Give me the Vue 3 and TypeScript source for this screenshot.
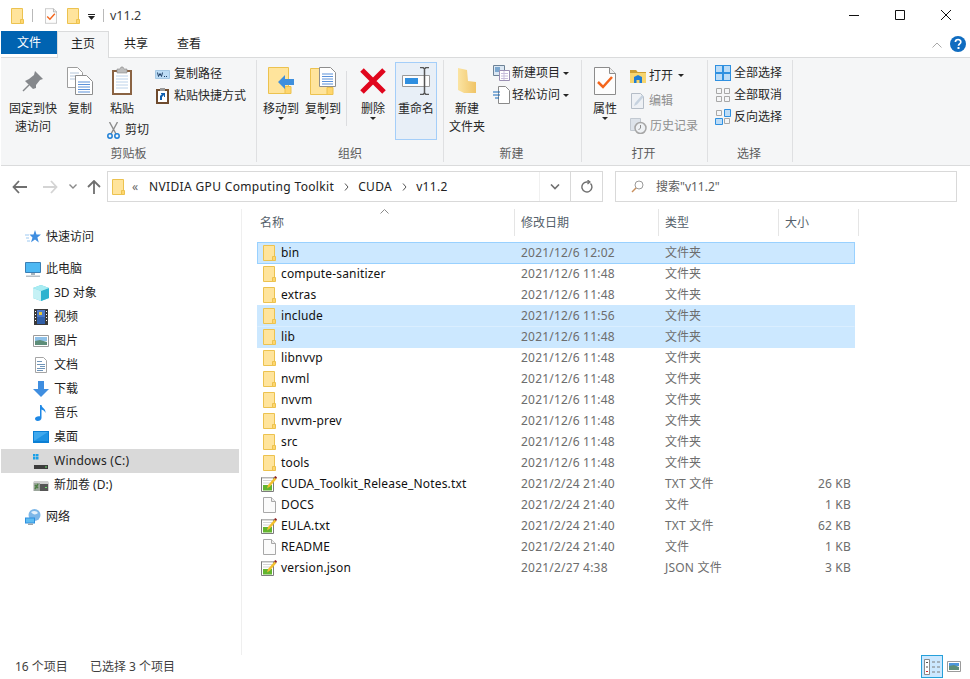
<script setup lang="ts">
type FileRow = { name: string; date: string; type: string; size: string; icon: string; sel: string };
const fo = '文件夹';
const d1 = '2021/12/6 11:48';
const files: FileRow[] = [
  { name: 'bin', date: '2021/12/6 12:02', type: fo, size: '', icon: 'i-folder', sel: 'focus' },
  { name: 'compute-sanitizer', date: d1, type: fo, size: '', icon: 'i-folder', sel: '' },
  { name: 'extras', date: d1, type: fo, size: '', icon: 'i-folder', sel: '' },
  { name: 'include', date: '2021/12/6 11:56', type: fo, size: '', icon: 'i-folder', sel: 'picked' },
  { name: 'lib', date: d1, type: fo, size: '', icon: 'i-folder', sel: 'picked next' },
  { name: 'libnvvp', date: d1, type: fo, size: '', icon: 'i-folder', sel: '' },
  { name: 'nvml', date: d1, type: fo, size: '', icon: 'i-folder', sel: '' },
  { name: 'nvvm', date: d1, type: fo, size: '', icon: 'i-folder', sel: '' },
  { name: 'nvvm-prev', date: d1, type: fo, size: '', icon: 'i-folder', sel: '' },
  { name: 'src', date: d1, type: fo, size: '', icon: 'i-folder', sel: '' },
  { name: 'tools', date: d1, type: fo, size: '', icon: 'i-folder', sel: '' },
  { name: 'CUDA_Toolkit_Release_Notes.txt', date: '2021/2/24 21:40', type: 'TXT 文件', size: '26 KB', icon: 'i-txt', sel: '' },
  { name: 'DOCS', date: '2021/2/24 21:40', type: '文件', size: '1 KB', icon: 'i-blank', sel: '' },
  { name: 'EULA.txt', date: '2021/2/24 21:40', type: 'TXT 文件', size: '62 KB', icon: 'i-txt', sel: '' },
  { name: 'README', date: '2021/2/24 21:40', type: '文件', size: '1 KB', icon: 'i-blank', sel: '' },
  { name: 'version.json', date: '2021/2/27 4:38', type: 'JSON 文件', size: '3 KB', icon: 'i-txt', sel: '' },
];
const navItems = [
  { label: '快速访问', icon: 'n-star', cls: 'top' },
  { label: '此电脑', icon: 'n-pc', cls: 'top gap' },
  { label: '3D 对象', icon: 'n-cube', cls: 'sub' },
  { label: '视频', icon: 'n-film', cls: 'sub' },
  { label: '图片', icon: 'n-pic', cls: 'sub' },
  { label: '文档', icon: 'n-doc', cls: 'sub' },
  { label: '下载', icon: 'n-down', cls: 'sub' },
  { label: '音乐', icon: 'n-music', cls: 'sub' },
  { label: '桌面', icon: 'n-desk', cls: 'sub' },
  { label: 'Windows (C:)', icon: 'n-c', cls: 'sub on' },
  { label: '新加卷 (D:)', icon: 'n-d', cls: 'sub' },
  { label: '网络', icon: 'n-net', cls: 'top gap' },
];
</script>

<template>
  <div class="win">
    <svg class="defs" aria-hidden="true">
      <symbol id="i-folder" viewBox="0 0 13 16">
        <path d="M.5.5h11v15H.5z" fill="#ffe49c" stroke="#ecc24f" />
        <path d="M9.5 15.5v-4h3v4z" fill="#ffd66e" stroke="#ecc24f" />
      </symbol>
      <symbol id="i-blank" viewBox="0 0 13 16">
        <path d="M.5.5h8l4 4v11H.5z" fill="#fbfbfb" stroke="#a8a8a8" />
        <path d="M8.500.5v4h4" fill="#eee" stroke="#a8a8a8" />
      </symbol>
      <symbol id="i-txt" viewBox="0 0 16 16">
        <path d="M.5 1.500h12v14H.5z" fill="#fff" stroke="#7c7c7c" />
        <path d="M1 1h11v1.500H1z" fill="#b5b5b5" />
        <path d="M2 9h9v5.500H2z" fill="#63b52f" />
        <path d="M2 4h9v1H2zM2 6.500h7v1H2z" fill="#d5d5d5" />
        <path d="M6 12.500l1-3.500 6.500-7.500 2 1.500-6.500 7.500z" fill="#f2c02e" />
        <path d="M13 1.500l1.200-1.500L16 1.200 15.200 3z" fill="#8b2020" />
      </symbol>
      <symbol id="n-star" viewBox="0 0 16 16">
        <path d="M10 1l1.500 4.500H16l-3.600 3 1.400 5-3.800-3-4 2.800 1.500-4.800L4.500 5.500H8.500z" fill="#3f8ee0" />
        <path d="M0 6h4M1 9h3M2 12h3" stroke="#9cc9f2" />
      </symbol>
      <symbol id="n-pc" viewBox="0 0 16 16">
        <path d="M.5 1.500h15v10H.5z" fill="#4db8f3" stroke="#3a7fb5" />
        <path d="M6 12h4v2H6z" fill="#a6b3bd" />
        <path d="M1 14.500h14V16H1z" fill="#b6bfc6" />
      </symbol>
      <symbol id="n-cube" viewBox="0 0 16 16">
        <path d="M8 0l8 3v10l-8 3-8-3V3z" fill="#5fcfe0" />
        <path d="M8 6l8-3v10l-8 3z" fill="#2fb3cf" />
        <path d="M8 0l8 3-8 3-8-3z" fill="#a9ecf2" />
        <path d="M0 3l8 3v10l-8-3z" fill="#c5f1f5" />
      </symbol>
      <symbol id="n-film" viewBox="0 0 14 16">
        <path d="M0 0h14v16H0z" fill="#3a3a3a" />
        <path d="M3 1h8v7H3z" fill="#4c78c8" />
        <path d="M3 8h8v7H3z" fill="#315fa8" />
        <path d="M5 3h3v3H5z" fill="#e6c83a" />
        <path d="M1 2h1v1H1zM1 5h1v1H1zM1 8h1v1H1zM1 11h1v1H1zM12 2h1v1h-1zM12 5h1v1h-1zM12 8h1v1h-1zM12 11h1v1h-1z" fill="#fff" />
      </symbol>
      <symbol id="n-pic" viewBox="0 0 16 12">
        <path d="M.5.500h15v11H.5z" fill="#fff" stroke="#9b9b9b" />
        <path d="M2 2h12v4H2z" fill="#8fc1e8" />
        <path d="M2 6l5-1 7 2v3H2z" fill="#5d8d78" />
      </symbol>
      <symbol id="n-doc" viewBox="0 0 12 16">
        <path d="M.5.500h8l3 3v12H.5z" fill="#fff" stroke="#a5a5a5" />
        <path d="M2 4h5v1H2zM2 7h8v1H2zM5 9h5v1H5zM2 11h8v1H2zM2 13h6v1H2z" fill="#6f94b8" />
      </symbol>
      <symbol id="n-down" viewBox="0 0 16 16">
        <path d="M5 0h6v8h5l-8 8-8-8h5z" fill="#3f8ee0" />
      </symbol>
      <symbol id="n-music" viewBox="0 0 12 16">
        <path d="M5 0h1.500c.3 3 4.500 3.500 4 8C9.500 5.500 8 5 6.500 4.500V13c0 2-2 3-3.800 3C1 16 0 15 0 13.800 0 12 2.500 10.700 5 11.300z" fill="#1e88e5" />
      </symbol>
      <symbol id="n-desk" viewBox="0 0 16 12">
        <path d="M0 0h16v12H0z" fill="#0b7fd4" />
        <path d="M1 1h14v9H1z" fill="#3fa9ee" />
        <path d="M1 10l14-9v9z" fill="#1e93e3" />
      </symbol>
      <symbol id="n-c" viewBox="0 0 16 16">
        <path d="M0 1h2.500v2.500H0zM3 1h2.500v2.500H3zM0 4h2.500v2.500H0zM3 4h2.500v2.500H3z" fill="#19a0e8" />
        <path d="M1 9h14l1 2v5H0v-5z" fill="#d6d6d6" />
        <path d="M1 12h14v4H1z" fill="#3c3c3c" />
        <path d="M12 13.500h2v1h-2z" fill="#6fe06f" />
      </symbol>
      <symbol id="n-d" viewBox="0 0 16 12">
        <path d="M1 2h14l1 2v8H0V4z" fill="#cfcfcf" />
        <path d="M1 5h14v7H1z" fill="#555" />
        <path d="M1 4h6v8H1z" fill="#9aa59a" />
        <path d="M2 6l3 3M5 5L2 10" stroke="#4f7f45" stroke-width="1.500" />
        <path d="M12 8h2v1h-2z" fill="#6fe06f" />
      </symbol>
      <symbol id="n-net" viewBox="0 0 16 16">
        <circle cx="9.500" cy="6" r="6" fill="#7db7e8" />
        <path d="M6 3c3-2 6-1 7 1-2 2-5 2-7-1z" fill="#e4f1fb" />
        <path d="M0 8.500h10v6H0z" fill="#2f8fde" />
        <path d="M1 9.500h8v4H1z" fill="#5ebcf2" />
        <path d="M3 14.500h5v1.500H3z" fill="#9aa5ad" />
      </symbol>
      <symbol id="r-doc-check" viewBox="0 0 22 28">
        <path d="M.5.500h15l6 6v21H.5z" fill="#fdfdfd" stroke="#8c8c8c" />
        <path d="M15.500.500v6h6" fill="#eee" stroke="#8c8c8c" />
        <path d="M4 15l5 5 9-10" fill="none" stroke="#f4651c" stroke-width="2.500" />
      </symbol>
    </svg>

    <header class="title">
      <svg class="ic12" width="13" height="16"><use href="#i-folder" /></svg>
      <span class="tsep first"></span>
      <svg class="tdoc" width="12" height="16" viewBox="0 0 22 28"><use href="#r-doc-check" /></svg>
      <svg class="tfold" width="13" height="16"><use href="#i-folder" /></svg>
      <svg class="tdrop" width="7" height="6" viewBox="0 0 7 6"><path d="M0 0h7v1H0zM0 2h7L3.500 6z" fill="#222" /></svg>
      <span class="tsep second"></span>
      <span class="ttext">v11.2</span>
      <div class="caps">
        <svg width="46" height="30" viewBox="0 0 46 30"><path d="M18 15.500h10" stroke="#111" /></svg>
        <svg width="46" height="30" viewBox="0 0 46 30"><path d="M18.500 10.500h9v9h-9z" fill="none" stroke="#111" /></svg>
        <svg width="46" height="30" viewBox="0 0 46 30"><path d="M18 10l10 10M28 10L18 20" stroke="#111" fill="none" /></svg>
      </div>
    </header>

    <nav class="tabs">
      <span class="tab file">文件</span>
      <span class="tab home">主页</span>
      <span class="tab share">共享</span>
      <span class="tab view">查看</span>
      <svg class="collapse" width="10" height="6" viewBox="0 0 10 6"><path d="M.500 5.500L5 1l4.500 4.500" fill="none" stroke="#a9a9a9" /></svg>
      <svg class="help" width="16" height="16" viewBox="0 0 16 16">
        <circle cx="8" cy="8" r="8" fill="#0f6cc0" />
        <path d="M5.400 6c0-3.300 5.400-3.300 5.400-.1 0 2-2.300 2-2.300 3.900" fill="none" stroke="#fff" stroke-width="1.700" />
        <path d="M7.500 11h2v2h-2z" fill="#fff" />
      </svg>
    </nav>

    <section class="ribbon">
      <div class="group g1">
        <div class="body">
          <button class="big pin">
            <span class="bi"><svg width="22" height="22" viewBox="0 0 22 22"><path d="M13 1l8 8-3 1-4 5v3l-3 1-8-8 4-2 5-4z" fill="#85888c" /><path d="M7 15l-6 6" stroke="#85888c" stroke-width="1.500" /></svg></span>
            <span class="lb">固定到快<br />速访问</span>
          </button>
          <button class="big copy">
            <span class="bi"><svg width="26" height="30" viewBox="0 0 26 30">
              <path d="M.5 1.500h10l5 5v15H.5z" fill="#fff" stroke="#9d9d9d" />
              <path d="M3 7h9M3 10h9M3 13h9" stroke="#b5c6da" />
              <path d="M8.500 9.500h11l6 6v13h-17z" fill="#fff" stroke="#8e8e8e" />
              <path d="M11 16h12M11 18.500h12M11 21h12M11 23.500h12M11 26h12" stroke="#5b91d9" />
            </svg></span>
            <span class="lb">复制</span>
          </button>
          <div class="pastecol">
            <button class="big paste">
              <span class="bi"><svg width="22" height="30" viewBox="0 0 22 30">
                <path d="M1 4h20v25H1z" fill="#8a6343" />
                <path d="M3 6h16v21H3z" fill="#fff" />
                <path d="M5 10h12M5 13h12M5 16h12M5 19h12M5 22h12" stroke="#bcd2ea" />
                <path d="M6 3h3l1-2h2l1 2h3v4H6z" fill="#bdbdbd" stroke="#8b8b8b" stroke-width=".6" />
              </svg></span>
              <span class="lb">粘贴</span>
            </button>
            <button class="small cut">
              <svg width="13" height="17" viewBox="0 0 13 17">
                <path d="M10.500 0L4 12M2.500 0L9 12" stroke="#8c8c8c" stroke-width="1.400" />
                <circle cx="3" cy="14" r="2.200" fill="none" stroke="#1e7fd6" stroke-width="1.500" />
                <circle cx="10" cy="14" r="2.200" fill="none" stroke="#1e7fd6" stroke-width="1.500" />
              </svg>
              <span>剪切</span>
            </button>
          </div>
          <div class="smallcol clipsm">
            <button class="small">
              <svg width="15" height="9" viewBox="0 0 15 9"><path d="M.5.500h14v8H.5z" fill="#bcdcf5" stroke="#a5c8e4" /><path d="M2.500 2.500l1 4 1.500-3 1.500 3 1-4M9 6.500h1M11 6.500h1" fill="none" stroke="#1f3f66" /></svg>
              <span>复制路径</span>
            </button>
            <button class="small">
              <svg class="sh" width="13" height="16" viewBox="0 0 13 16"><path d="M0 1h13v15H0z" fill="#6f4b2e" /><path d="M2 3h9v11H2z" fill="#fff" /><path d="M4 0h5v3H4z" fill="#999" /><path d="M4 12V8l2-2H5V5h4v4H8V7L6 9v3z" fill="#0f5fb0" /></svg>
              <span>粘贴快捷方式</span>
            </button>
          </div>
        </div>
        <div class="glabel">剪贴板</div>
      </div>

      <div class="group g2">
        <div class="body">
          <button class="big w42 first-org">
            <span class="bi"><svg width="27" height="28" viewBox="0 0 27 28">
              <path d="M.5.500h20v26H.5z" fill="#ffe49c" stroke="#ecc24f" /><path d="M17 26.500v-7h6v7z" fill="#ffd66e" stroke="#ecc24f" />
              <path d="M10 15l7-7v4h9v6h-9v4z" fill="#3e8fdd" />
            </svg></span>
            <span class="lb">移动到</span><i class="caret"></i>
          </button>
          <button class="big w42">
            <span class="bi"><svg width="27" height="29" viewBox="0 0 27 29">
              <path d="M.5 1.500h20v26H.5z" fill="#ffe49c" stroke="#ecc24f" /><path d="M17 27.500v-7h6v7z" fill="#ffd66e" stroke="#ecc24f" />
              <path d="M9.500.5h11l5 5v14h-16z" fill="#fff" stroke="#8e8e8e" />
              <path d="M12 7h11M12 9.500h11M12 12h11M12 14.500h11M12 17h11" stroke="#5b91d9" />
            </svg></span>
            <span class="lb">复制到</span><i class="caret"></i>
          </button>
          <span class="vsep"></span>
          <button class="big w46 del">
            <span class="bi"><svg width="26" height="26" viewBox="0 0 26 26"><path d="M2 2l22 22M24 2L2 24" stroke="#e0061d" stroke-width="5" /></svg></span>
            <span class="lb">删除</span><i class="caret"></i>
          </button>
          <button class="big rename">
            <span class="bi"><svg width="29" height="28" viewBox="0 0 29 28">
              <path d="M.5 8.500h27v11H.5z" fill="#fdfdfd" stroke="#9a9a9a" />
              <path d="M3 11h13v6H3z" fill="#2f8fe0" />
              <path d="M18 .5h3l1.500 1.500L24 .5h3M22.500 2v24M18 27.500h3l1.500-1.500 1.500 1.500h3" fill="none" stroke="#555" stroke-width="1.500" />
            </svg></span>
            <span class="lb">重命名</span>
          </button>
        </div>
        <div class="glabel">组织</div>
      </div>

      <div class="group g3">
        <div class="body">
          <button class="big w46 newf">
            <span class="bi"><svg width="20" height="28" viewBox="0 0 20 28">
              <defs><linearGradient id="gf" x1="0" x2="1" y1="0" y2="0"><stop offset="0" stop-color="#fbe4a3" /><stop offset="1" stop-color="#f0c466" /></linearGradient></defs>
              <path d="M1 1l9 2 1 11 8 1v11H7l-6-3z" fill="url(#gf)" />
            </svg></span>
            <span class="lb">新建<br />文件夹</span>
          </button>
          <div class="smallcol newsm">
            <button class="small">
              <svg width="17" height="16" viewBox="0 0 17 16"><path d="M.5.500h11v10H.5z" fill="#dbe7f3" stroke="#6d8296" /><path d="M2 2h5v5H2z" fill="#7ca7cf" /><path d="M6.500 5.500h10v10h-10z" fill="#fff" stroke="#9a8fb3" /><path d="M8 8.500h7M8 11h7M8 13.500h7M11 6v9" stroke="#c8bfdc" /></svg>
              <span>新建项目</span><i class="caret in"></i>
            </button>
            <button class="small">
              <svg width="17" height="18" viewBox="0 0 17 18"><path d="M5.500.5h7l4 4v13h-11z" fill="#fff" stroke="#8a8a8a" /><path d="M0 6h7M0 9h7M2 12h4" stroke="#1769b9" stroke-width="1.200" /></svg>
              <span>轻松访问</span><i class="caret in"></i>
            </button>
          </div>
        </div>
        <div class="glabel">新建</div>
      </div>

      <div class="group g4">
        <div class="body">
          <button class="big prop">
            <span class="bi"><svg width="22" height="28" viewBox="0 0 22 28"><use href="#r-doc-check" /></svg></span>
            <span class="lb">属性</span><i class="caret"></i>
          </button>
          <div class="smallcol opensm">
            <button class="small">
              <svg width="16" height="14" viewBox="0 0 16 14"><path d="M0 1h6l1.500 2H16v11H0z" fill="#f7d56f" /><path d="M0 1h6l1.500 2H16v1H0z" fill="#cc9f34" /><path d="M4 8l4-2 4 2v6H9.500v-3h-3v3H4z" fill="#1f7dd4" /></svg>
              <span>打开</span><i class="caret in"></i>
            </button>
            <button class="small dim">
              <svg width="16" height="16" viewBox="0 0 16 16"><path d="M1.500.5h9l3 3v12h-12z" fill="#eef1f5" stroke="#b5bdc7" /><path d="M4 13l1-3 7-8 2 1.500-7 8z" fill="#c6d2df" /></svg>
              <span>编辑</span>
            </button>
            <button class="small dim">
              <svg width="17" height="16" viewBox="0 0 17 16"><path d="M.5.500h10v12H.5z" fill="#dde3ea" stroke="#c2c9d1" /><circle cx="10.500" cy="10" r="5.500" fill="#eef1f4" stroke="#a6a6a6" stroke-width="1.500" /><path d="M10.500 7v3l-2 2" fill="none" stroke="#8c8c8c" /></svg>
              <span>历史记录</span>
            </button>
          </div>
        </div>
        <div class="glabel">打开</div>
      </div>

      <div class="group g5">
        <div class="body">
          <div class="smallcol selsm">
            <button class="small">
              <svg width="16" height="16" viewBox="0 0 16 16"><path d="M0 0h16v16H0z" fill="#2f90e0" /><path d="M1 1h6v6H1zM9 1h6v6H9zM1 9h6v6H1zM9 9h6v6H9z" fill="#bcdcf7" /></svg>
              <span>全部选择</span>
            </button>
            <button class="small">
              <svg width="16" height="16" viewBox="0 0 16 16"><path d="M1.500 1.500h5v5h-5zM9.500 1.500h5v5h-5zM1.500 9.500h5v5h-5zM9.500 9.500h5v5h-5z" fill="none" stroke="#a8a8a8" /></svg>
              <span>全部取消</span>
            </button>
            <button class="small">
              <svg width="16" height="16" viewBox="0 0 16 16"><path d="M1.500 1.500h5v5h-5zM9.500 9.500h5v5h-5z" fill="none" stroke="#a8a8a8" /><path d="M9.500.5h6v7h-6zM.5 9.500h7v6h-7z" fill="#bcdcf7" stroke="#2f90e0" /></svg>
              <span>反向选择</span>
            </button>
          </div>
        </div>
        <div class="glabel">选择</div>
      </div>
    </section>

    <div class="addr">
      <div class="arrows">
        <svg width="16" height="14" viewBox="0 0 16 14"><path d="M7 1L1.500 7 7 13M2 7h13" fill="none" stroke="#6f6f6f" stroke-width="1.800" /></svg>
        <svg class="f" width="16" height="14" viewBox="0 0 16 14"><path d="M9 1l5.500 6L9 13M14 7H1" fill="none" stroke="#d4d4d4" stroke-width="1.800" /></svg>
        <svg class="d" width="8" height="5" viewBox="0 0 8 5"><path d="M.5.500L4 4 7.500.500" fill="none" stroke="#8a8a8a" stroke-width="1.400" /></svg>
        <svg class="u" width="14" height="14" viewBox="0 0 14 14"><path d="M1 7l6-6 6 6M7 1.500V14" fill="none" stroke="#6f6f6f" stroke-width="1.800" /></svg>
      </div>
      <div class="path">
        <svg class="pf" width="13" height="16"><use href="#i-folder" /></svg>
        <span class="chev">«</span>
        <span class="seg">NVIDIA GPU Computing Toolkit</span>
        <svg class="sepc" width="5" height="8" viewBox="0 0 5 8"><path d="M1 .5L4 4 1 7.500" fill="none" stroke="#555" /></svg>
        <span class="seg">CUDA</span>
        <svg class="sepc" width="5" height="8" viewBox="0 0 5 8"><path d="M1 .5L4 4 1 7.500" fill="none" stroke="#555" /></svg>
        <span class="seg">v11.2</span>
        <span class="spacer"></span>
        <span class="pbtn ddl"><svg width="10" height="6" viewBox="0 0 10 6"><path d="M1 .5l4 4 4-4" fill="none" stroke="#707070" stroke-width="1.600" /></svg></span>
        <span class="pbtn rf"><svg width="12" height="13" viewBox="0 0 12 13"><path d="M9.500 3.500A5 5 0 1 1 5.500 2H8" fill="none" stroke="#6f6f6f" stroke-width="1.400" /><path d="M6.500 0l2.500 2-2.500 2" fill="none" stroke="#6f6f6f" stroke-width="1.200" /></svg></span>
      </div>
      <div class="search">
        <svg width="13" height="13" viewBox="0 0 13 13"><circle cx="8" cy="5" r="4" fill="none" stroke="#9a9a9a" /><path d="M5 8l-4 4" stroke="#c98f5c" stroke-width="1.400" /></svg>
        <span>搜索"v11.2"</span>
      </div>
    </div>

    <main class="main">
      <aside class="nav">
        <div v-for="n in navItems" :key="n.label" class="navrow" :class="n.cls">
          <svg class="nic" width="16" height="16"><use :href="'#' + n.icon" /></svg>
          <span>{{ n.label }}</span>
        </div>
      </aside>
      <div class="list">
        <div class="head">
          <span class="hc h1">名称
            <svg class="sort" width="9" height="5" viewBox="0 0 9 5"><path d="M.5 4.500l4-4 4 4" fill="none" stroke="#8a8a8a" /></svg>
          </span>
          <span class="hc h2">修改日期</span>
          <span class="hc h3">类型</span>
          <span class="hc h4">大小</span>
        </div>
        <div class="rows">
          <div v-for="f in files" :key="f.name" class="row" :class="f.sel">
            <span class="cname">
              <svg class="fic" :class="f.icon" width="16" height="16"><use :href="'#' + f.icon" /></svg>
              <span>{{ f.name }}</span>
            </span>
            <span class="meta latin">{{ f.date }}</span>
            <span class="meta" :class="{ latin: f.type !== fo && f.type !== '文件' }">{{ f.type }}</span>
            <span class="meta size latin">{{ f.size }}</span>
          </div>
        </div>
      </div>
    </main>

    <footer class="status">
      <span class="s1">16 个项目</span>
      <span class="s2">已选择 3 个项目</span>
      <span class="spacer"></span>
      <span class="vbtn active">
        <svg width="16" height="16" viewBox="0 0 16 16"><path d="M.5.500h5v15h-5z" fill="#fff" stroke="#8a8a8a" /><path d="M2 3h2v1H2zM2 7.500h2v1H2z" fill="#555" /><path d="M2 12h2v1H2z" fill="#d2232a" /><path d="M8 3h3M13 3h3M8 8h3M13 8h3M8 13h3M13 13h3" stroke="#7c7c7c" /></svg>
      </span>
      <span class="vbtn second">
        <svg width="14" height="11" viewBox="0 0 14 11"><path d="M.5.500h13v10H.5z" fill="#fff" stroke="#9b9b9b" /><path d="M2 2h10v3H2z" fill="#4d96dc" /><path d="M2 5l5-1 5 2v3H2z" fill="#5d8d78" /></svg>
      </span>
    </footer>
  </div>
</template>

<style>
html, body { margin: 0; padding: 0; background: #fff; }
</style>

<style scoped>
.win {
  width: 970px; height: 679px; overflow: hidden; display: flex; flex-direction: column;
  background: #fff; color: #1e1e1e; position: relative;
  font: 12px/18px "Noto Sans", "Noto Sans CJK SC", sans-serif;
}
.defs { position: absolute; width: 0; height: 0; }
button { all: unset; box-sizing: border-box; }
svg { display: block; flex: none; }
.spacer { flex: 1; }

.title { height: 31px; display: flex; align-items: center; padding-left: 11px; flex: none; }
.tsep { width: 1px; height: 13px; background: #b9b9b9; }
.tsep.first { margin-left: 8px; }
.tdoc { margin-left: 12px; }
.tfold { margin-left: 10px; }
.tdrop { margin-left: 8px; margin-top: 3px; }
.tsep.second { margin-left: 8px; }
.ttext { margin-left: 6px; color: #3a3a3a; font-size: 12.500px; }
.caps { margin-left: auto; display: flex; margin-right: 1px; align-self: flex-start; }

.tabs { height: 26px; display: flex; flex: none; position: relative; padding-left: 1px; }
.tab { display: flex; align-items: center; justify-content: center; height: 25px; box-sizing: border-box; }
.file { width: 56px; height: 23px; background: #0063b1; color: #fff; }
.home { width: 52px; height: 27px; background: #f5f6f7; border: 1px solid #dadbdc; border-bottom: 0; position: relative; z-index: 1; padding-bottom: 2px; }
.share { margin-left: 15px; width: 24px; }
.view { margin-left: 29px; width: 24px; }
.collapse { position: absolute; left: 932px; top: 11px; }
.help { position: absolute; left: 950px; top: 5px; }

.ribbon {
  height: 109px; box-sizing: border-box; flex: none; display: flex; margin-left: 1px;
  background: #f5f6f7; border-top: 1px solid #dadbdc; border-bottom: 1px solid #dadbdc;
}
.group { box-sizing: border-box; display: flex; flex-direction: column; border-right: 1px solid #dfe0e2; height: 102px; margin-top: 2px; }
.g1 { width: 256px; }
.g2 { width: 187px; }
.g3 { width: 138px; }
.g4 { width: 126px; }
.g5 { width: 85px; }
.g3 .glabel, .g4 .glabel, .g5 .glabel { padding-right: 2px; }
.body { display: flex; height: 85px; padding-top: 2px; box-sizing: border-box; flex: none; }
.glabel { text-align: center; color: #5c5c5c; }
.big { display: flex; flex-direction: column; align-items: center; padding-top: 4px; color: #262626; flex: none; }
.bi { height: 30px; display: flex; align-items: center; justify-content: center; margin-bottom: 4px; }
.lb { text-align: center; white-space: nowrap; display: block; }
.pin { width: 50px; margin-left: 7px; }
.copy { width: 44px; }
.pastecol { width: 40px; display: flex; flex-direction: column; }
.paste { width: 40px; }
.small { display: flex; align-items: center; height: 22px; gap: 4px; color: #262626; white-space: nowrap; }
.cut { margin-left: 5px; gap: 5px; margin-top: 1px; }
.smallcol { display: flex; flex-direction: column; }
.clipsm { margin-left: 13px; margin-top: 1px; }
.clipsm .sh { margin-left: 1px; margin-right: 1px; }
.caret { width: 0; height: 0; border: 3px solid transparent; border-top: 3px solid #262626; border-bottom: 0; margin-top: -1px; display: block; }
.caret.in { margin-top: 0; }
.w42 { width: 42px; }
.first-org { margin-left: 3px; }
.vsep { width: 1px; height: 55px; background: #dcdde0; margin: 9px 0 0 2px; }
.w46 { width: 46px; }
.del { margin-left: 3px; margin-right: -1px; }
.rename { width: 42px; height: 78px; box-sizing: border-box; background: #e8eff7; border: 1px solid #a4cef9; padding-top: 3px; }
.newsm { margin-left: 3px; }
.newsm .small { gap: 2px; }
.newsm .caret.in { margin-left: 1px; }
.prop { width: 46px; }
.opensm { margin-left: 2px; margin-top: 1px; }
.opensm .small { height: 25px; gap: 3px; }
.opensm .caret.in { margin-left: 2px; }
.dim { color: #8f8f8f; }
.selsm { margin-left: 7px; }
.selsm .small { gap: 3px; }

.addr { height: 39px; box-sizing: border-box; padding-top: 5px; display: flex; flex: none; }
.arrows { width: 107px; height: 31px; box-sizing: border-box; padding-left: 12px; display: flex; align-items: center; flex: none; }
.arrows .f { margin-left: 14px; }
.arrows .d { margin-left: 11px; }
.arrows .u { margin-left: 10px; }
.path { width: 496px; height: 31px; box-sizing: border-box; border: 1px solid #d9d9d9; display: flex; align-items: center; flex: none; }
.pf { margin-left: 4px; }
.chev { margin-left: 7px; width: 17px; color: #666; }
.seg { color: #222; letter-spacing: .35px; }
.sepc { margin: 0 9.500px; }
.pbtn { height: 29px; display: flex; align-items: center; justify-content: center; }
.ddl { width: 30px; border-left: 1px solid #f0f0f0; }
.rf { width: 31px; border-left: 1px solid #d9d9d9; }
.search { margin-left: 12px; width: 342px; height: 31px; box-sizing: border-box; border: 1px solid #d9d9d9; display: flex; align-items: center; padding-left: 15px; gap: 12px; color: #5e5e5e; }

.main { height: 450px; box-sizing: border-box; display: flex; padding-top: 4px; flex: none; }
.nav { width: 242px; box-sizing: border-box; border-right: 1px solid #efefef; padding: 16px 0 0 1px; flex: none; }
.navrow { height: 24px; width: 238px; display: flex; align-items: center; color: #1e1e1e; box-sizing: border-box; }
.navrow.top { padding-left: 24px; gap: 5px; }
.navrow.gap { margin-top: 8px; }
.navrow.sub { padding-left: 32px; gap: 5px; }
.navrow.on { background: #d9d9d9; letter-spacing: .25px; }

.list { flex: 1; }
.head { display: flex; height: 27px; color: #555f6b; }
.hc { display: flex; align-items: center; box-sizing: border-box; border-right: 1px solid #e5e5e5; padding-left: 6px; position: relative; }
.h1 { width: 273px; padding-left: 18px; }
.h2 { width: 144px; }
.h3 { width: 120px; }
.h4 { width: 80px; }
.sort { position: absolute; left: 138px; top: 0; }
.rows { margin-top: 6px; margin-left: 15px; width: 598px; }
.row {
  height: 22px; margin-bottom: -1px; box-sizing: border-box; border: 1px solid transparent;
  display: grid; grid-template-columns: 263px 144px 100px 86px; align-items: center; position: relative;
}
.row.focus { background: #cce8ff; border-color: #99d1ff; }
.row.picked { background: #cce8ff; border-color: #cce8ff; }
.row.next { border-top-color: #daeeff; }
.cname { display: flex; align-items: center; padding-left: 5px; color: #111; white-space: nowrap; letter-spacing: .16px; }
.fic { width: 13px; margin-right: 5px; }
.fic.i-txt { width: 16px; margin-left: -2px; margin-right: 4px; }
.meta { color: #6d6d6d; white-space: nowrap; }
.meta.latin { letter-spacing: .2px; }
.size { text-align: right; }

.status { height: 24px; display: flex; align-items: center; color: #3f3f3f; flex: none; }
.s1 { margin-left: 15px; width: 75px; }
.vbtn { height: 23px; display: flex; align-items: center; justify-content: center; box-sizing: border-box; border: 1px solid transparent; align-self: flex-start; }
.vbtn.active { width: 22px; background: #cce8ff; border-color: #26a0da; margin-right: 1px; }
.vbtn.second { width: 20px; margin-right: 6px; }
</style>
